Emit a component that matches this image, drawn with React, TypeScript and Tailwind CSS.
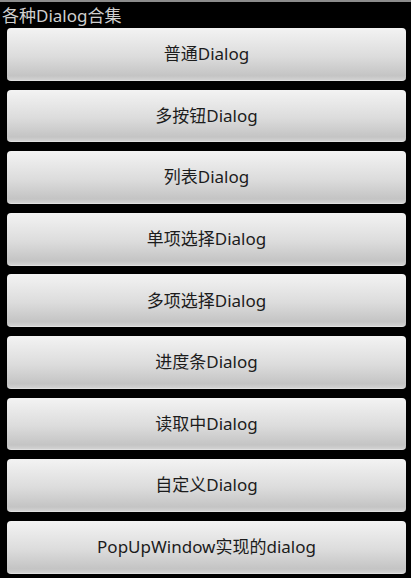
import React from "react";

const items = [
  "普通Dialog",
  "多按钮Dialog",
  "列表Dialog",
  "单项选择Dialog",
  "多项选择Dialog",
  "进度条Dialog",
  "读取中Dialog",
  "自定义Dialog",
  "PopUpWindow实现的dialog",
];

export default function App() {
  return (
    <div
      className="w-[411px] h-[578px] bg-black flex flex-col overflow-hidden"
      style={{ fontFamily: '"Noto Sans", "Noto Sans CJK SC", sans-serif' }}
    >
      <div className="h-[2px] bg-[#8c8c8c]" />
      <div className="h-[26px] flex items-center pl-[2px] text-[17px] leading-none text-[#cfcfcf]">
        各种Dialog合集
      </div>
      <div className="flex flex-col gap-[8.8px] pl-[7px] pr-[5px]">
        {items.map((t) => (
          <button
            key={t}
            className="h-[52.8px] w-full rounded-[4px] bg-[linear-gradient(to_bottom,#f3f3f3_0%,#dcdcdc_55%,#c4c4c4_92%,#d2d2d2_100%)] border-b border-[#e0e0e0] flex items-center justify-center text-[17px] text-[#1c1c1c]"
          >
            {t}
          </button>
        ))}
      </div>
    </div>
  );
}
